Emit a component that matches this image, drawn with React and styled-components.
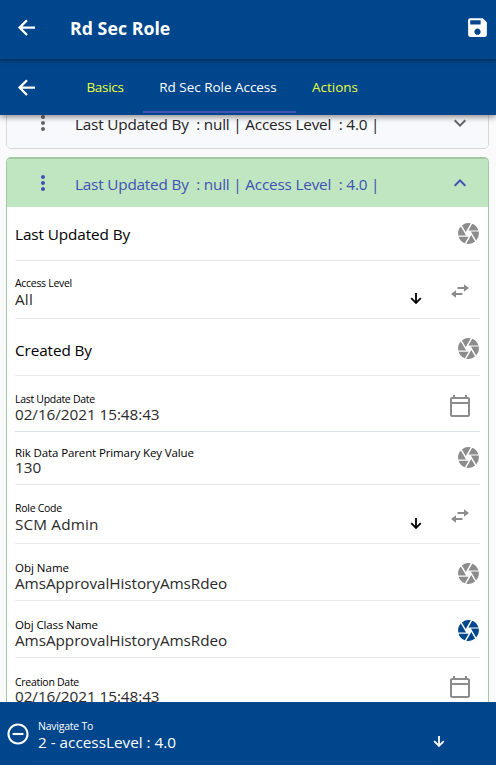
import React from "react";
import styled, { createGlobalStyle } from "styled-components";
import { IoMdSave, IoMdRemoveCircleOutline } from "react-icons/io";
import { MdCamera, MdMoreVert, MdOutlineCalendarToday, MdExpandMore, MdExpandLess } from "react-icons/md";

const Global = createGlobalStyle`
  * { box-sizing: border-box; }
  body { margin: 0; background: #fafafa; font-family: "Open Sans", "Noto Sans", sans-serif; }
  svg { display: block; flex: none; }
`;

const Screen = styled.div`
  display: flex;
  flex-direction: column;
  width: 496px;
  height: 765px;
  overflow: hidden;
  background: #fafafa;
`;

const Header = styled.header`
  flex: none;
  display: flex;
  align-items: center;
  height: 59px;
  padding: 0 6px 4px 14px;
  background: #00468c;
  color: #fff;
  z-index: 3;
  box-shadow: 0 1px 4px rgba(0, 0, 0, 0.5);
`;

const Title = styled.h1`
  flex: 1;
  margin: 1px 0 0 31px;
  font: 700 17.7px/24px "Open Sans", sans-serif;
  letter-spacing: ${(p) => p.$spacing}px;
`;

const TabBar = styled.nav`
  flex: none;
  display: flex;
  align-items: center;
  height: 56px;
  padding-left: 14px;
  background: #00468c;
  color: #fff;
  z-index: 2;
  box-shadow: 0 2px 6px rgba(0, 0, 0, 0.45);
`;

const Tabs = styled.div`
  display: flex;
  margin-left: 28px;
`;

const Tab = styled.div`
  width: ${(p) => p.$width}px;
  height: 49px;
  margin-top: 2px;
  padding-right: ${(p) => (p.$active ? 3 : 0)}px;
  border-bottom: 2px solid ${(p) => (p.$active ? "#3f51b5" : "transparent")};
  color: ${(p) => (p.$active ? "#fff" : "#eaff3c")};
  font-size: 13.5px;
  line-height: 47px;
  letter-spacing: ${(p) => p.$spacing}px;
  text-align: center;
  white-space: nowrap;
`;

const Content = styled.main`
  flex: 1;
  min-height: 0;
  overflow: hidden;
  padding: 0 7px 0 6px;
`;

const Card = styled.section`
  border: 1px solid ${(p) => (p.$open ? "#a2c9a4" : "#d8d8da")};
  border-top-width: ${(p) => (p.$open ? 2 : 1)}px;
  border-radius: 5px;
  background: #fff;
  overflow: hidden;
  margin-top: ${(p) => (p.$open ? 8 : -18)}px;
`;

const CardHead = styled.div`
  display: flex;
  align-items: center;
  height: ${(p) => (p.$open ? 48 : 50)}px;
  padding: 0 16px 0 24px;
  background: ${(p) => (p.$open ? "#c0e6c1" : "#f8f9fc")};
  color: ${(p) => (p.$open ? "#3f51b5" : "#666")};
`;

const CardTitle = styled.div`
  flex: 1;
  margin-left: 20px;
  padding-top: 2px;
  color: ${(p) => (p.$open ? "#3f51b5" : "#222")};
  font-size: 15.3px;
  line-height: 22px;
  letter-spacing: ${(p) => p.$spacing}px;
  white-space: pre;
`;

const Row = styled.div`
  display: flex;
  height: ${(p) => p.$height}px;
  margin: 0 8px;
  border-bottom: 1px solid ${(p) => p.$line || "#e7e8ea"};
`;

const Field = styled.div`
  flex: 1;
  padding-top: ${(p) => p.$top}px;
`;

const Label = styled.div`
  color: #000;
  font-size: ${(p) => (p.$wide ? 11.5 : 10.5)}px;
  line-height: 14px;
  letter-spacing: ${(p) => p.$spacing}px;
`;

const Value = styled.div`
  margin-top: ${(p) => p.$gap || 0}px;
  color: ${(p) => (p.$empty ? "#000" : "#2a2a2a")};
  font-size: 15.3px;
  line-height: 16px;
  letter-spacing: ${(p) => p.$spacing}px;
  white-space: nowrap;
`;

const RowIcon = styled.div`
  padding-top: ${(p) => p.$top}px;
  margin-right: ${(p) => p.$right || 0}px;
  color: ${(p) => p.$color || "#8c8c8c"};
`;

const Footer = styled.footer`
  flex: none;
  display: flex;
  height: 63px;
  padding-left: 5px;
  background: #00468c;
  color: #fff;
`;

const FooterField = styled.div`
  flex: 1;
  height: 60px;
  padding: 17px 0 0 7px;
  border-bottom: 1px solid #0a4d90;
`;

const FooterLabel = styled(Label)`
  color: #fff;
`;

const FooterValue = styled(Value)`
  color: #fff;
`;

function BackArrow() {
  return (
    <svg width="25" height="25" viewBox="0 0 25 25" fill="none" stroke="currentColor" strokeWidth="2.3">
      <path d="M13 5.2L5.6 12.6L13 20M6 12.6H21" strokeLinejoin="miter" />
    </svg>
  );
}

function DownArrow() {
  return (
    <svg width="12" height="13" viewBox="0 0 12 13" fill="none" stroke="currentColor" strokeWidth="1.8">
      <path d="M1.2 6.2L6 11L10.8 6.2M6 1V10.6" />
    </svg>
  );
}

function Swap() {
  return (
    <svg width="18" height="14" viewBox="0 0 18 14" fill="currentColor">
      <path d="M6.5 3H13V.2L18 4L13 7.8V5H6.5zM11.5 9H5V6.2L0 10L5 13.8V11H11.5z" />
    </svg>
  );
}

const rows = [
  { value: "Last Updated By", empty: true, height: 54, top: 19, icon: "aperture", iconTop: 14, vs: -0.1 },
  { label: "Access Level", value: "All", height: 58, top: 15, icon: "swap", iconTop: 23, ls: -0.3, vs: 0.2, gap: 1 },
  { value: "Created By", empty: true, height: 57, top: 23, icon: "aperture", iconTop: 17, vs: -0.1 },
  { label: "Last Update Date", value: "02/16/2021 15:48:43", height: 56, top: 16, icon: "calendar", iconTop: 18, ls: -0.3, vs: -0.06 },
  { label: "Rik Data Parent Primary Key Value", value: "130", height: 53, top: 14, icon: "aperture", iconTop: 13, ls: -0.12, vs: 0, gap: -1, wide: true },
  { label: "Role Code", value: "SCM Admin", height: 59, top: 16, icon: "swap", iconTop: 24, ls: -0.27, vs: 0.15, gap: 1 },
  { label: "Obj Name", value: "AmsApprovalHistoryAmsRdeo", height: 57, top: 17, icon: "aperture", iconTop: 17, ls: 0, vs: -0.06, wide: true },
  { label: "Obj Class Name", value: "AmsApprovalHistoryAmsRdeo", height: 57, top: 17, icon: "aperture", iconTop: 17, ls: -0.12, vs: -0.06, wide: true, active: true },
  { label: "Creation Date", value: "02/16/2021 15:48:43", height: 57, top: 17, icon: "calendar", iconTop: 17, ls: -0.28, vs: -0.06, gap: -1 },
].map((row) => ({ ...row, line: row.icon === "calendar" ? "#d9e3ea" : "#e7e9eb" }));

function FieldRow({ row }) {
  return (
    <Row $height={row.height} $line={row.line}>
      <Field $top={row.top}>
        {row.label && <Label $wide={row.wide} $spacing={row.ls}>{row.label}</Label>}
        <Value $spacing={row.vs} $gap={row.gap} $empty={row.empty}>{row.value}</Value>
      </Field>
      {row.icon === "swap" && (
        <>
          <RowIcon $top={row.iconTop + 8} $right={29} $color="#000"><DownArrow /></RowIcon>
          <RowIcon $top={row.iconTop} $right={11}><Swap /></RowIcon>
        </>
      )}
      {row.icon === "aperture" && (
        <RowIcon $top={row.iconTop} $right={-1} $color={row.active ? "#00468c" : undefined}>
          <MdCamera size={25} />
        </RowIcon>
      )}
      {row.icon === "calendar" && (
        <RowIcon $top={row.iconTop} $right={8}><MdOutlineCalendarToday size={24} /></RowIcon>
      )}
    </Row>
  );
}

const summary = "Last Updated By  : null | Access Level  : 4.0 |";

export default function App() {
  return (
    <Screen>
      <Global />
      <Header>
        <BackArrow />
        <Title $spacing={0.05}>Rd Sec Role</Title>
        <IoMdSave size={25} />
      </Header>
      <TabBar>
        <BackArrow />
        <Tabs>
          <Tab $width={76} $spacing={-0.3}>Basics</Tab>
          <Tab $width={153} $spacing={-0.03} $active>Rd Sec Role Access</Tab>
          <Tab $width={78} $spacing={0}>Actions</Tab>
        </Tabs>
      </TabBar>
      <Content>
        <Card>
          <CardHead>
            <MdMoreVert size={24} />
            <CardTitle $spacing={-0.19}>{summary}</CardTitle>
            <MdExpandMore size={24} />
          </CardHead>
        </Card>
        <Card $open>
          <CardHead $open>
            <MdMoreVert size={24} />
            <CardTitle $open $spacing={-0.19}>{summary}</CardTitle>
            <MdExpandLess size={24} />
          </CardHead>
          {rows.map((row, i) => <FieldRow key={i} row={row} />)}
        </Card>
      </Content>
      <Footer>
        <RowIcon $top={19} $color="#fff"><IoMdRemoveCircleOutline size={26} /></RowIcon>
        <FooterField>
          <FooterLabel $spacing={-0.23}>Navigate To</FooterLabel>
          <FooterValue $spacing={0} $gap={1}>2 - accessLevel : 4.0</FooterValue>
        </FooterField>
        <RowIcon $top={33} $right={51} $color="#fff"><DownArrow /></RowIcon>
      </Footer>
    </Screen>
  );
}
